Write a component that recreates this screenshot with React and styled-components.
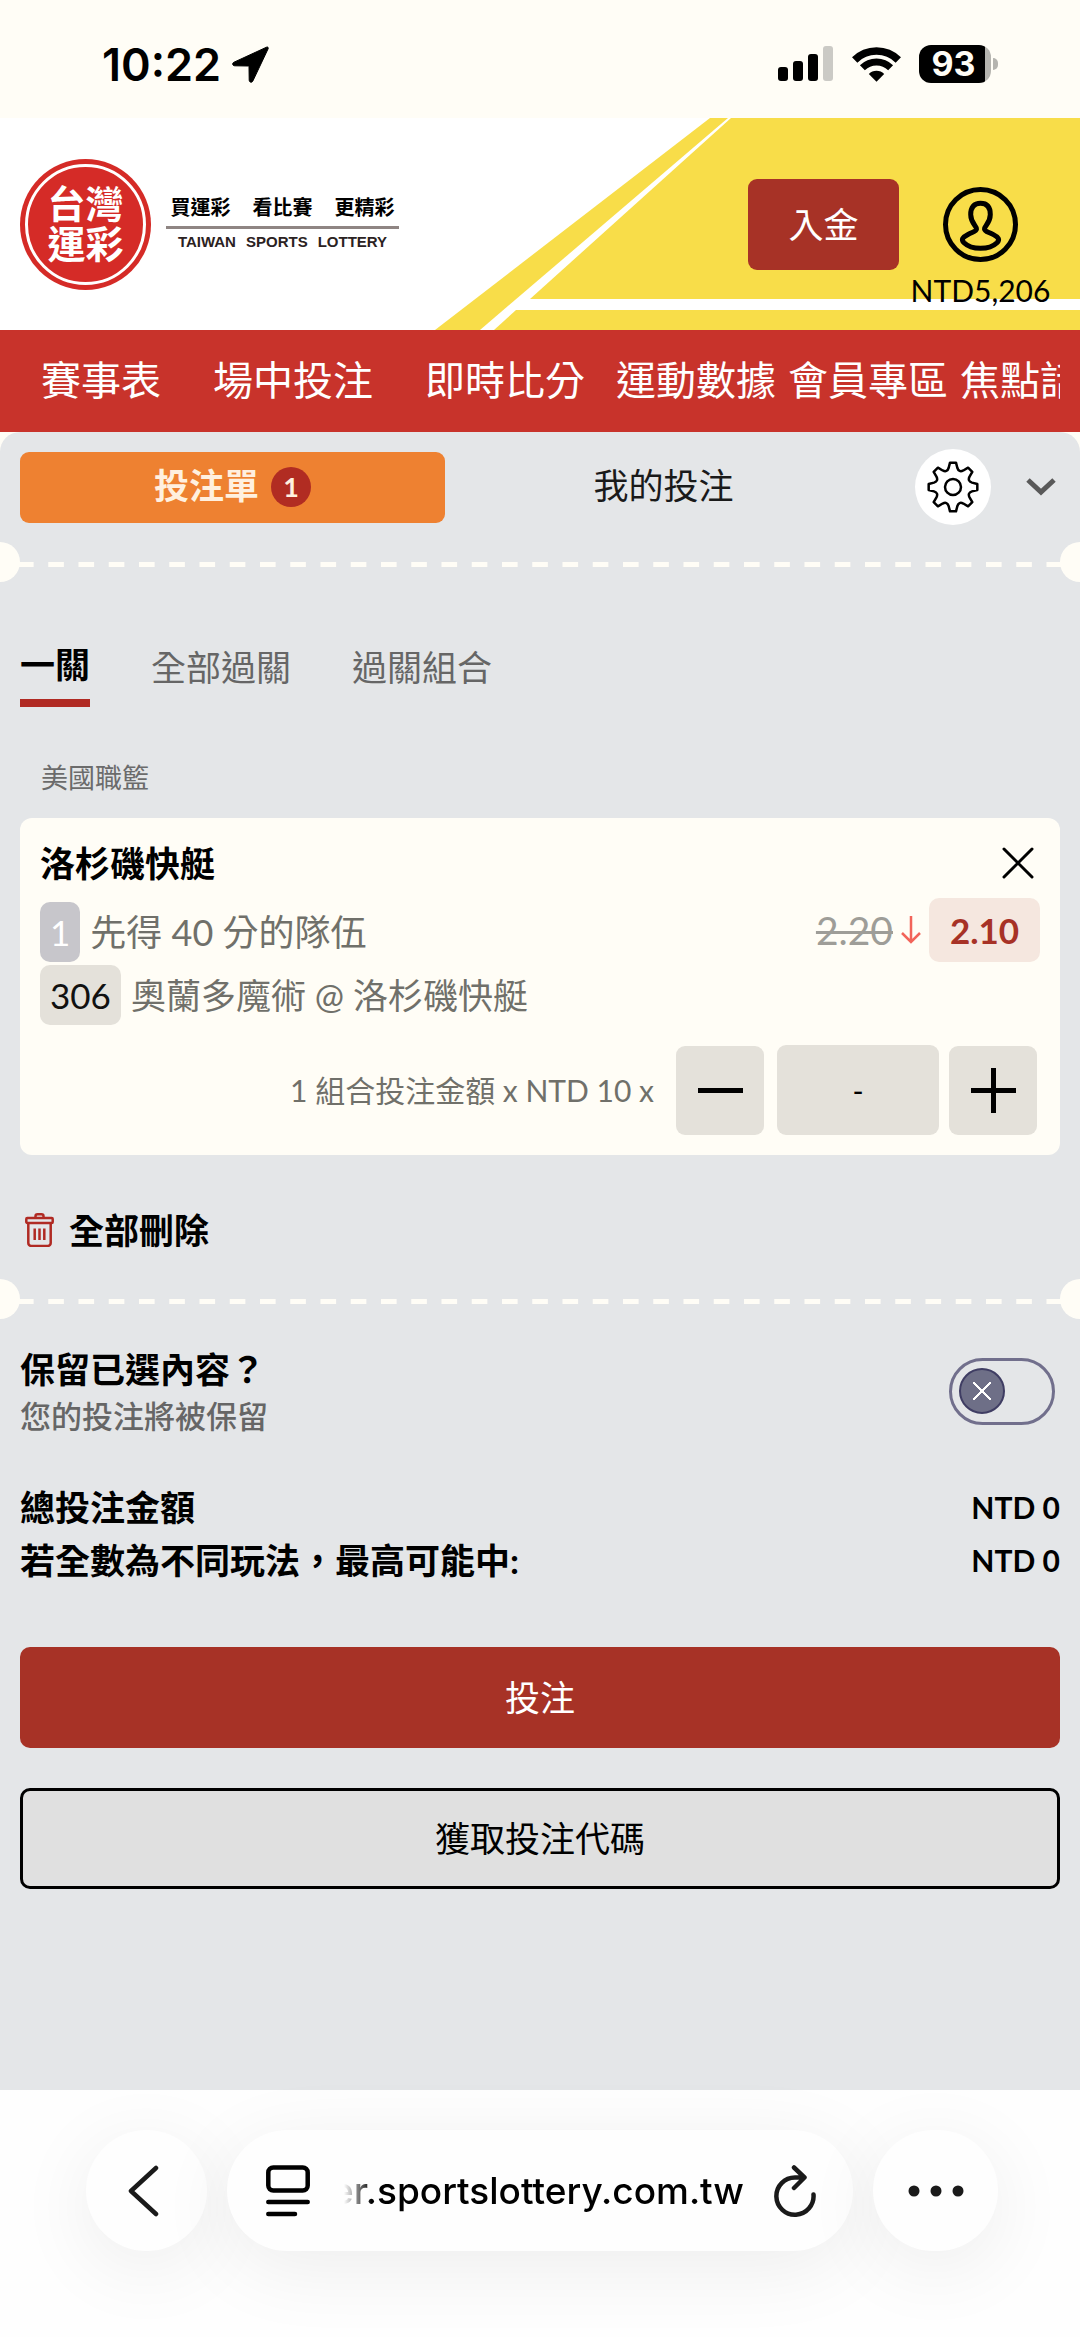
import React, { useState } from "react";
import styled, { createGlobalStyle, css } from "styled-components";

const GlobalStyle = createGlobalStyle`
  *, *::before, *::after {
    box-sizing: border-box;
  }

  body {
    margin: 0;
    background: #fffdf6;
    color: #000;
    font-family: "Lato", "Noto Sans CJK TC", sans-serif;
    font-size: 35px;
  }

  button, input {
    font-family: inherit;
    font-size: inherit;
    color: inherit;
    margin: 0;
    padding: 0;
    border: 0;
    background: none;
  }

  button {
    cursor: pointer;
  }

  a {
    color: inherit;
    text-decoration: none;
  }

  h1, h2, p, dl, dd {
    margin: 0;
    font-size: inherit;
    font-weight: inherit;
  }

  svg {
    display: block;
    flex-shrink: 0;
  }
`;

const Page = styled.div`
  display: flex;
  flex-direction: column;
  min-height: 100vh;
  overflow: hidden;
`;

/* status bar */

const StatusBar = styled.div`
  display: flex;
  align-items: center;
  justify-content: space-between;
  height: 118px;
  padding: 10px 82px 0 102px;
  font-family: "Inter", sans-serif;
`;

const StatusGroup = styled.div`
  display: flex;
  align-items: center;
  gap: ${(props) => props.$gap}px;
`;

const Clock = styled.span`
  font-size: 45px;
  font-weight: 600;
`;

const Battery = styled.div`
  display: flex;
  align-items: center;
  gap: 2px;
`;

const BatteryBody = styled.span`
  width: 72px;
  height: 38px;
  padding-right: 3px;
  border-radius: 12px;
  background: linear-gradient(90deg, #000 92%, #b5b4af 92%);
  color: #fffdf6;
  font-size: 34px;
  font-weight: 700;
  line-height: 38px;
  text-align: center;
`;

const BatteryNub = styled.span`
  width: 5px;
  height: 12px;
  border-radius: 0 6px 6px 0;
  background: #b5b4af;
`;

/* header */

const Header = styled.header`
  position: relative;
  display: flex;
  align-items: center;
  height: 212px;
  padding: 0 30px 0 20px;
  background: #fff;
`;

const Stripes = styled.svg`
  position: absolute;
  top: 0;
  right: 0;
`;

const Seal = styled.div`
  position: relative;
  display: grid;
  place-content: center;
  width: 131px;
  height: 131px;
  padding-bottom: 2px;
  border-radius: 50%;
  background: #d52b27;
  color: #fff;
  font-size: 38px;
  font-weight: 700;
  line-height: 40px;

  &::after {
    content: "";
    position: absolute;
    inset: 5px;
    border: 3px solid #fff;
    border-radius: 50%;
  }
`;

const Slogan = styled.div`
  width: 233px;
  margin-left: 15px;
  padding-bottom: 2px;
`;

const SloganRow = styled.div`
  display: flex;
  justify-content: center;
  gap: ${(props) => (props.$latin ? "10px" : "22px")};
  font-weight: 700;
  font-size: 20px;
  line-height: 30px;
  padding-bottom: 4px;

  ${(props) =>
    props.$latin &&
    css`
      border-top: 3px solid #8f8583;
      padding: 2px 0 2px;
      color: #2b2222;
      font-family: "Liberation Sans", sans-serif;
      font-size: 15px;
      line-height: 22px;
    `}
`;

const DepositButton = styled.button`
  position: relative;
  width: 151px;
  height: 91px;
  margin-left: auto;
  padding-bottom: 4px;
  border-radius: 9px;
  background: #a73226;
  color: #fff;
`;

const Profile = styled.a`
  position: relative;
  display: flex;
  flex-direction: column;
  align-items: center;
  align-self: flex-start;
  gap: 10px;
  width: 139px;
  margin: 69px 0 0 12px;
  font-size: 30px;
  line-height: 36px;
`;

const Nav = styled.nav`
  padding: 0 20px;
  background: #c8332b;
`;

const NavList = styled.div`
  display: flex;
  height: 102px;
  padding-left: 21px;
  overflow: hidden;
  color: #fff;
  font-size: 40px;
  line-height: 100px;
  white-space: nowrap;
`;

const NavLink = styled.a`
  flex-shrink: 0;
  margin-right: ${(props) => props.$space}px;
`;

/* bet slip */

const Slip = styled.main`
  flex: 1;
  padding: 17px 0 40px;
  border-radius: 20px 20px 0 0;
  background: #e4e6e8;
`;

const SlipHeader = styled.div`
  display: flex;
  align-items: center;
  padding: 0 20px;
`;

const SlipTab = styled.button`
  display: flex;
  flex: 1;
  align-items: center;
  justify-content: center;
  gap: 12px;
  height: 71px;
  margin-right: 6px;
  border-radius: 9px;
  color: #1a1a1a;
  line-height: 50px;

  > span:first-child {
    padding-bottom: 4px;
  }

  ${(props) =>
    props.$active &&
    css`
      background: #ee8131;
      color: #fff0df;
      font-weight: 700;
    `}
`;

const CountBadge = styled.span`
  width: 40px;
  height: 40px;
  border-radius: 50%;
  background: #b12c22;
  font-size: 27px;
  font-weight: 700;
  line-height: 40px;
`;

const GearButton = styled.button`
  display: grid;
  place-items: center;
  width: 76px;
  height: 76px;
  margin-left: 33px;
  border-radius: 50%;
  background: #fff;
`;

const CollapseButton = styled.button`
  margin: 0 4px 0 35px;
`;

const Perforation = styled.div`
  display: flex;
  height: 40px;
  margin-top: ${(props) => props.$top}px;
`;

const Notch = styled.span`
  width: 20px;
  border-radius: ${(props) => (props.$right ? "20px 0 0 20px" : "0 20px 20px 0")};
  background: #fffdf6;
`;

const Dashes = styled.span`
  flex: 1;
  align-self: center;
  height: 5px;
  margin: 5px -17px 0 -2px;
  background-image: linear-gradient(90deg, #fffdf6 50%, transparent 50%);
  background-size: 30px 5px;
  background-repeat: round;
`;

const Section = styled.section`
  padding: 0 20px;
`;

const ModeTabs = styled.div`
  display: flex;
  align-items: flex-end;
  gap: 61px;
  margin-top: 57px;
`;

const ModeTab = styled.button`
  padding-bottom: 15px;
  color: #666;
  line-height: 50px;

  ${(props) =>
    props.$active &&
    css`
      padding-bottom: 10px;
      border-bottom: 8px solid #b02a23;
      color: #000;
      font-weight: 700;
    `}
`;

const League = styled.p`
  margin: 51px 0 20px;
  padding-left: 21px;
  color: #6b6b6b;
  font-size: 27px;
  line-height: 40px;
`;

const BetCard = styled.article`
  padding: 20px;
  border-radius: 12px;
  background: #fffdf6;
  color: #70706a;
`;

const CardRow = styled.div`
  display: flex;
  align-items: ${(props) => props.$align || "center"};
  justify-content: space-between;
  margin-top: ${(props) => props.$top || 0}px;
`;

const CardTitle = styled.h2`
  color: #000;
  font-weight: 700;
  line-height: 50px;
`;

const CloseButton = styled.button`
  padding: 6px;
`;

const Market = styled.div`
  display: flex;
  align-items: center;
  gap: 10px;
  font-size: ${(props) => (props.$large ? 36 : 35)}px;
  line-height: 60px;
`;

const Tag = styled.span`
  padding: 0 10px;
  border-radius: 10px;
  background: ${(props) => (props.$muted ? "#c7c6cb" : "#e4e1da")};
  color: ${(props) => (props.$muted ? "#fff" : "#111")};
  font-size: 35px;
`;

const Odds = styled.div`
  display: flex;
  align-items: center;
  gap: 8px;
`;

const OldOdds = styled.s`
  color: #9e9d98;
  font-size: 39px;
  text-decoration-thickness: 3px;
`;

const NewOdds = styled.button`
  width: 111px;
  height: 64px;
  border-radius: 10px;
  background: #f5e7df;
  color: #a73226;
  font-size: 35px;
  font-weight: 700;
`;

const StakeRow = styled.div`
  display: flex;
  align-items: center;
  justify-content: flex-end;
  margin: 20px 3px 0 0;
`;

const StakeLabel = styled.label`
  margin-right: 22px;
  padding-bottom: 3px;
  font-size: 30px;
`;

const StepButton = styled.button`
  display: grid;
  place-items: center;
  width: 88px;
  height: 89px;
  border-radius: 9px;
  background: #e4e1da;
`;

const StakeInput = styled.input`
  width: 162px;
  height: 90px;
  margin: 0 10px 0 13px;
  border-radius: 9px;
  background: #e4e1da;
  color: #000;
  font-size: 30px;
  text-align: center;
`;

const ClearButton = styled.button`
  display: flex;
  align-items: center;
  gap: 15px;
  margin: 50px 0 0 5px;
  font-weight: 700;
  line-height: 50px;
`;

const KeepRow = styled.div`
  display: flex;
  align-items: center;
  justify-content: space-between;
  margin-top: 25px;
  padding-right: 5px;
`;

const KeepLabel = styled.label`
  font-weight: 700;
  line-height: 50px;
`;

const KeepNote = styled.p`
  color: #666;
  font-size: 31px;
  font-weight: 500;
  line-height: 44px;
`;

const Toggle = styled.input`
  appearance: none;
  display: grid;
  align-items: center;
  justify-content: ${(props) => (props.checked ? "end" : "start")};
  width: 106px;
  height: 67px;
  padding: 0 7px;
  border: 3px solid #716f8c;
  border-radius: 34px;
  cursor: pointer;

  &::before {
    content: "";
    width: 46px;
    height: 46px;
    border: 2px solid #3f3d63;
    border-radius: 50%;
    background:
      linear-gradient(45deg, transparent 45%, #fff 46% 54%, transparent 55%) center / 18px 18px no-repeat,
      linear-gradient(-45deg, transparent 45%, #fff 46% 54%, transparent 55%) center / 18px 18px no-repeat,
      #6e6f87;
  }
`;

const Totals = styled.dl`
  margin-top: 43px;
  line-height: 53px;
`;

const TotalRow = styled.div`
  display: flex;
  justify-content: space-between;
  font-weight: 700;

  dd {
    font-size: 30px;
  }
`;

const ActionButton = styled.button`
  display: block;
  width: 100%;
  height: 101px;
  margin-top: ${(props) => (props.$outline ? 40 : 60)}px;
  padding-bottom: 4px;
  border: ${(props) => (props.$outline ? "3px solid #000" : "0")};
  border-radius: 10px;
  background: ${(props) => (props.$outline ? "#e0e0e0" : "#a73226")};
  color: ${(props) => (props.$outline ? "#000" : "#fff")};
`;

/* browser toolbar */

const Toolbar = styled.footer`
  display: flex;
  gap: 20px;
  padding: 40px 82px 86px 86px;
  background: #fefefe;
`;

const glass = css`
  display: flex;
  align-items: center;
  height: 121px;
  border-radius: 61px;
  background: #fefefe;
  box-shadow: 0 16px 80px rgba(0, 0, 0, 0.07);
`;

const RoundButton = styled.button`
  ${glass}
  justify-content: center;
  width: ${(props) => props.$width}px;
`;

const AddressBar = styled.div`
  ${glass}
  flex: 1;
  min-width: 0;
  padding: 0 37px 0 39px;
`;

const Address = styled.a`
  display: flex;
  flex: 1;
  justify-content: flex-end;
  min-width: 0;
  margin: 0 30px 0 34px;
  overflow: hidden;
  font-family: "Inter", sans-serif;
  font-size: 37px;
  font-weight: 500;
  line-height: 50px;
  mask-image: linear-gradient(90deg, transparent, #000 28px);
`;

const navItems = [
  { label: "賽事表", space: 52 },
  { label: "場中投注", space: 52 },
  { label: "即時比分", space: 31 },
  { label: "運動數據", space: 12 },
  { label: "會員專區", space: 12 },
  { label: "焦點話題", space: 0 },
];

const modes = ["一關", "全部過關", "過關組合"];

const LocationIcon = () => (
  <svg width="37" height="37" viewBox="0 0 37 37">
    <path
      d="M34.5 1.2 2 16.2c-2.2 1-1.6 3.6.8 3.6l13.6.2c.4 0 .6.2.6.6l.2 13.4c0 2.5 2.7 3.100 3.700.9L36 3c.7-1.500-.2-2.400-1.500-1.800Z"
      fill="#000"
      stroke="#000"
      strokeWidth="1"
    />
  </svg>
);

const SignalIcon = () => (
  <svg width="56" height="36" viewBox="0 0 56 36">
    <rect x="0" y="21" width="10" height="14" rx="3" />
    <rect x="15" y="15" width="10" height="20" rx="3" />
    <rect x="30" y="8" width="10" height="27" rx="3" />
    <rect x="45" y="0" width="10" height="35" rx="3" fill="#cbcac5" />
  </svg>
);

const WifiIcon = () => (
  <svg width="49" height="36" viewBox="0 0 49 36">
    <g fill="none" stroke="#000">
      <path d="M2.700 14A31 31 0 0 1 46.300 14" strokeWidth="7.600" />
      <path d="M10.400 21.700A20 20 0 0 1 38.600 21.700" strokeWidth="7" />
    </g>
    <path d="M24.500 35.800 16.800 28a11 11 0 0 1 15.400 0Z" />
  </svg>
);

const UserIcon = () => (
  <svg width="75" height="75" viewBox="0 0 75 75" fill="none" stroke="#000" strokeWidth="5">
    <circle cx="37.500" cy="37.500" r="35" />
    <path
      d="M33.500 42c.2-3-5.800-6-5.800-14.500 0-7.500 3.300-11.300 9.800-11.300s9.800 3.800 9.800 11.300c0 8.500-6 11.500-5.800 14.500.2 2.500 3.500 2.800 8.500 5.400 5.500 2.800 7.200 5 4 8.300-3.500 3.400-9 5.600-16.500 5.600S24.500 59.100 21 55.700c-3.200-3.300-1.500-5.500 4-8.300 5-2.600 8.300-2.900 8.500-5.400Z"
      strokeLinejoin="round"
    />
  </svg>
);

// one tooth of the gear, repeated around the centre
const gearPath = () => {
  const at = (angle, radius) => {
    const rad = (angle * Math.PI) / 180;
    return `${(26 + radius * Math.sin(rad)).toFixed(2)} ${(26 - radius * Math.cos(rad)).toFixed(2)}`;
  };
  let d = "";
  for (let a = 0; a < 360; a += 45) {
    d += `${a ? "L" : "M"}${at(a - 7, 24.5)}L${at(a + 7, 24.5)}L${at(a + 13, 19.5)}`;
    d += `Q${at(a + 22.5, 15.5)} ${at(a + 32, 19.5)}`;
  }
  return `${d}Z`;
};

const GearIcon = () => (
  <svg width="52" height="52" viewBox="0 0 52 52" fill="none" stroke="#000" strokeWidth="2.500" strokeLinejoin="round">
    <path d={gearPath()} />
    <circle cx="26" cy="26" r="8" />
  </svg>
);

const ChevronIcon = () => (
  <svg width="30" height="18" viewBox="0 0 30 18" fill="none" stroke="#595959" strokeWidth="5">
    <path d="M2 2 15 14 28 2" />
  </svg>
);

const CrossIcon = () => (
  <svg width="32" height="32" viewBox="0 0 32 32" stroke="#000" strokeWidth="3" strokeLinecap="round">
    <path d="M2 2 30 30M30 2 2 30" />
  </svg>
);

const ArrowDownIcon = () => (
  <svg width="20" height="28" viewBox="0 0 20 28" fill="none" stroke="#f2645a" strokeWidth="2.500">
    <path d="M10 0V26M1 17 10 26 19 17" />
  </svg>
);

const MinusIcon = () => (
  <svg width="45" height="45" viewBox="0 0 45 45" stroke="#000" strokeWidth="5">
    <path d="M0 22.500H45" />
  </svg>
);

const PlusIcon = () => (
  <svg width="45" height="45" viewBox="0 0 45 45" stroke="#000" strokeWidth="5">
    <path d="M0 22.500H45M22.500 0V45" />
  </svg>
);

const TrashIcon = () => (
  <svg width="29" height="34" viewBox="0 0 29 34" fill="none" stroke="#b02a23" strokeWidth="2.500">
    <rect x="1.300" y="5" width="26.400" height="5" rx="1" />
    <path d="M10.500 5V3.300a2 2 0 0 1 2-2h4a2 2 0 0 1 2 2V5" />
    <path d="M3.300 10V30a3 3 0 0 0 3 3H22.700a3 3 0 0 0 3-3V10" />
    <path d="M9.700 15.500V27M14.500 15.500V27M19.300 15.500V27" />
  </svg>
);

const BackIcon = () => (
  <svg width="38" height="52" viewBox="0 0 38 52" fill="none" stroke="#1a1a1a" strokeWidth="4.500">
    <path d="M28 3 3 26 28 49" strokeLinecap="round" strokeLinejoin="round" />
  </svg>
);

const ReaderIcon = () => (
  <svg width="44" height="52" viewBox="0 0 44 52" fill="none" stroke="#000" strokeWidth="4.500" strokeLinecap="round">
    <rect x="2.300" y="2.500" width="39.400" height="23" rx="5" />
    <path d="M2.300 37H41.700M2.300 49H29" />
  </svg>
);

const ReloadIcon = () => (
  <svg width="42" height="52" viewBox="0 0 42 52" fill="none" stroke="#1a1a1a" strokeWidth="4.500">
    <path
      d="M39.500 29.500A18.600 18.600 0 1 1 21 12.500h9M20 2.500 30.500 12.500 20 23"
      strokeLinecap="round"
      strokeLinejoin="round"
    />
  </svg>
);

const MoreIcon = () => (
  <svg width="56" height="12" viewBox="0 0 56 12" fill="#1a1a1a">
    <circle cx="6" cy="6" r="5.500" />
    <circle cx="28" cy="6" r="5.500" />
    <circle cx="50" cy="6" r="5.500" />
  </svg>
);

const Divider = ({ top }) => (
  <Perforation $top={top}>
    <Notch />
    <Dashes />
    <Notch $right />
  </Perforation>
);

const App = () => {
  const [mode, setMode] = useState(modes[0]);
  const [keep, setKeep] = useState(false);
  const [stake, setStake] = useState(0);

  return (
    <>
      <GlobalStyle />
      <Page>
        <StatusBar>
          <StatusGroup $gap={11}>
            <Clock>10:22</Clock>
            <LocationIcon />
          </StatusGroup>
          <StatusGroup $gap={18}>
            <SignalIcon />
            <WifiIcon />
            <Battery>
              <BatteryBody>93</BatteryBody>
              <BatteryNub />
            </Battery>
          </StatusGroup>
        </StatusBar>

        <Header>
          <Stripes width="645" height="212" viewBox="0 0 645 212" fill="#f8dd49">
            <path d="M275 0H293L45 212H0Z" />
            <path d="M296 0H645V181H95Z" />
            <path d="M81 192H645V212H59Z" />
          </Stripes>
          <Seal>
            <span>
              台灣
              <br />
              運彩
            </span>
          </Seal>
          <Slogan>
            <SloganRow>
              <span>買運彩</span>
              <span>看比賽</span>
              <span>更精彩</span>
            </SloganRow>
            <SloganRow $latin>
              <span>TAIWAN</span>
              <span>SPORTS</span>
              <span>LOTTERY</span>
            </SloganRow>
          </Slogan>
          <DepositButton type="button">入金</DepositButton>
          <Profile href="#account">
            <UserIcon />
            NTD5,206
          </Profile>
        </Header>

        <Nav>
          <NavList>
            {navItems.map((item) => (
              <NavLink key={item.label} href="#" $space={item.space}>
                {item.label}
              </NavLink>
            ))}
          </NavList>
        </Nav>

        <Slip>
          <SlipHeader>
            <SlipTab type="button" $active>
              <span>投注單</span>
              <CountBadge>1</CountBadge>
            </SlipTab>
            <SlipTab type="button">
              <span>我的投注</span>
            </SlipTab>
            <GearButton type="button" aria-label="設定">
              <GearIcon />
            </GearButton>
            <CollapseButton type="button" aria-label="收合">
              <ChevronIcon />
            </CollapseButton>
          </SlipHeader>

          <Divider top={17} />

          <Section>
            <ModeTabs>
              {modes.map((name) => (
                <ModeTab key={name} type="button" $active={name === mode} onClick={() => setMode(name)}>
                  {name}
                </ModeTab>
              ))}
            </ModeTabs>

            <League>美國職籃</League>
            <BetCard>
              <CardRow>
                <CardTitle>洛杉磯快艇</CardTitle>
                <CloseButton type="button" aria-label="移除">
                  <CrossIcon />
                </CloseButton>
              </CardRow>
              <CardRow $top={10} $align="flex-end">
                <Market $large>
                  <Tag $muted>1</Tag>
                  <span>先得 40 分的隊伍</span>
                </Market>
                <Odds>
                  <OldOdds>2.20</OldOdds>
                  <ArrowDownIcon />
                  <NewOdds type="button">2.10</NewOdds>
                </Odds>
              </CardRow>
              <CardRow $top={3}>
                <Market>
                  <Tag>306</Tag>
                  <span>奧蘭多魔術 @ 洛杉磯快艇</span>
                </Market>
              </CardRow>
              <StakeRow>
                <StakeLabel htmlFor="stake">1 組合投注金額 x NTD 10 x</StakeLabel>
                <StepButton type="button" aria-label="減少" onClick={() => setStake(Math.max(0, stake - 1))}>
                  <MinusIcon />
                </StepButton>
                <StakeInput
                  id="stake"
                  value={stake || "-"}
                  onChange={(e) => setStake(parseInt(e.target.value, 10) || 0)}
                />
                <StepButton type="button" aria-label="增加" onClick={() => setStake(stake + 1)}>
                  <PlusIcon />
                </StepButton>
              </StakeRow>
            </BetCard>

            <ClearButton type="button">
              <TrashIcon />
              全部刪除
            </ClearButton>
          </Section>

          <Divider top={24} />

          <Section>
            <KeepRow>
              <div>
                <KeepLabel htmlFor="keep">保留已選內容？</KeepLabel>
                <KeepNote>您的投注將被保留</KeepNote>
              </div>
              <Toggle id="keep" type="checkbox" checked={keep} onChange={(e) => setKeep(e.target.checked)} />
            </KeepRow>

            <Totals>
              <TotalRow>
                <dt>總投注金額</dt>
                <dd>NTD {stake * 10}</dd>
              </TotalRow>
              <TotalRow>
                <dt>若全數為不同玩法，最高可能中:</dt>
                <dd>NTD {stake * 21}</dd>
              </TotalRow>
            </Totals>

            <ActionButton type="button">投注</ActionButton>
            <ActionButton type="button" $outline>
              獲取投注代碼
            </ActionButton>
          </Section>
        </Slip>

        <Toolbar>
          <RoundButton type="button" aria-label="返回" $width={121}>
            <BackIcon />
          </RoundButton>
          <AddressBar>
            <ReaderIcon />
            <Address href="#">er.sportslottery.com.tw</Address>
            <ReloadIcon />
          </AddressBar>
          <RoundButton type="button" aria-label="更多" $width={125}>
            <MoreIcon />
          </RoundButton>
        </Toolbar>
      </Page>
    </>
  );
};

export default App;
